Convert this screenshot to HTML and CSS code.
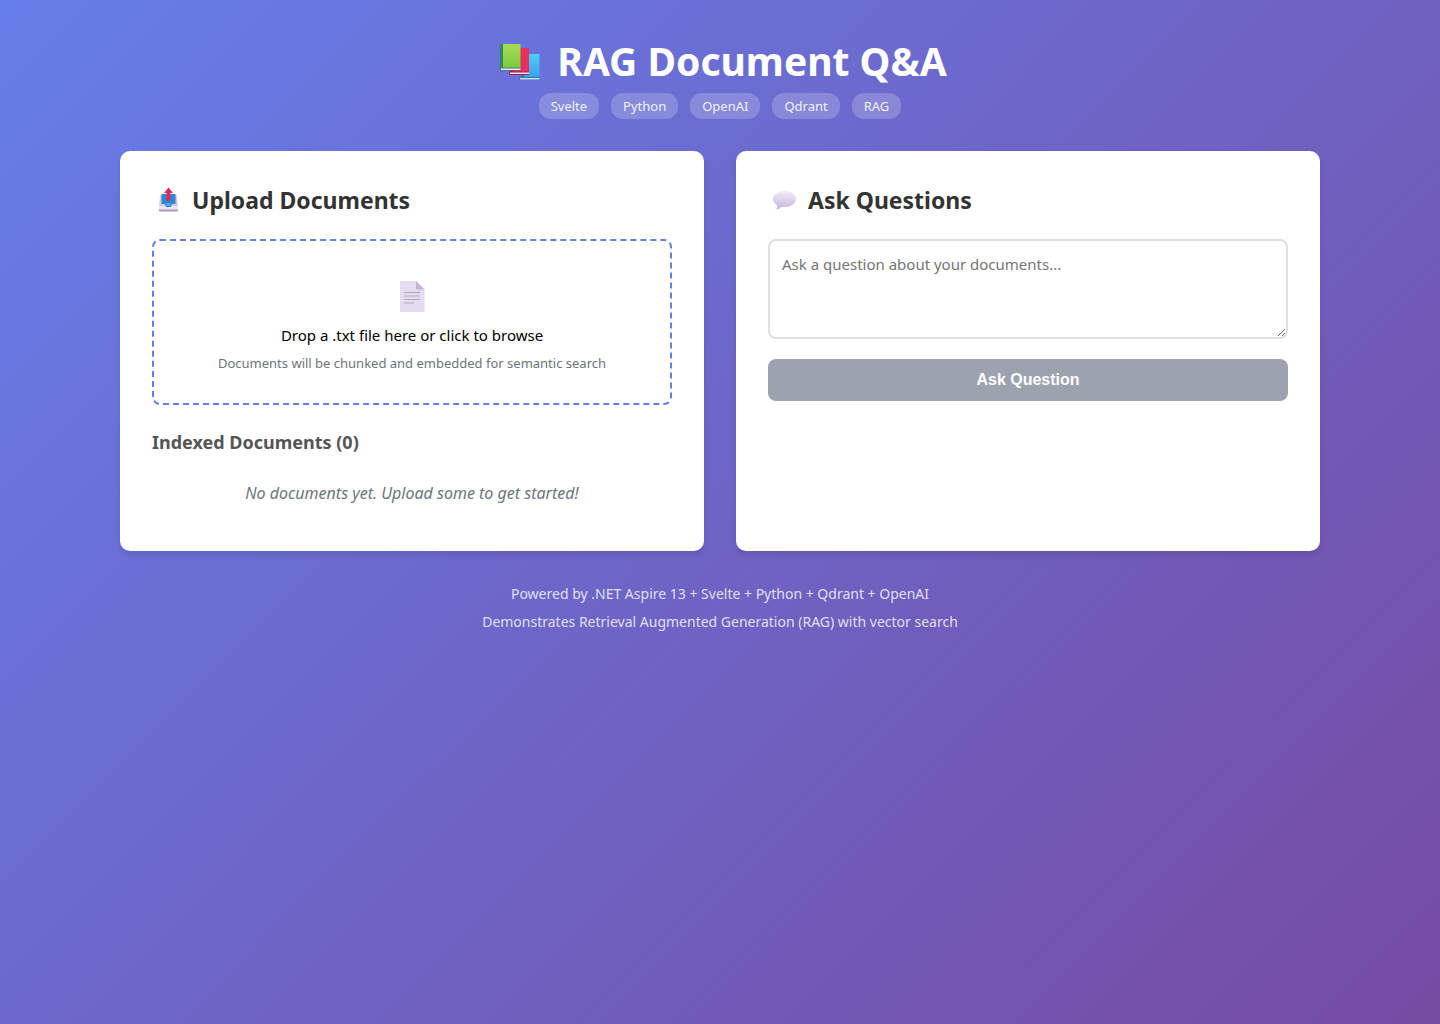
FILE: index.html
```
<!DOCTYPE html>
<html lang="en">
<head>
    <meta charset="UTF-8">
    <meta name="viewport" content="width=device-width, initial-scale=1.0">
    <title>RAG Document Q&amp;A</title>
    <link rel="stylesheet" href="styles.css">
</head>
<body>
    <div class="container">
        <header class="header">
            <h1>
                <svg class="icon-books" viewBox="0 -4 42 42" aria-hidden="true">
                    <defs>
                        <linearGradient id="green" x1="0" y1="0" x2="0" y2="1">
                            <stop offset="0" stop-color="#a5dc55"/>
                            <stop offset="1" stop-color="#7cc945"/>
                        </linearGradient>
                        <linearGradient id="blue" x1="0" y1="0" x2="0" y2="1">
                            <stop offset="0" stop-color="#4fcdf5"/>
                            <stop offset="1" stop-color="#3a9ee8"/>
                        </linearGradient>
                    </defs>
                    <path fill="#2580bd" d="M22 10h4v25h-4z"/>
                    <path fill="url(#blue)" d="M25 10h15.500v25H25z"/>
                    <path fill="#2b78b5" d="M20 33h20.500v3H21q-1 0-1-1z"/>
                    <path fill="#d9d5e8" d="M21 34h19.500v1.500H21z"/>
                    <path fill="#a91c4a" d="M11 4h4v26h-4z"/>
                    <path fill="#e6305f" d="M14 4h16v25H14z"/>
                    <path fill="#a91c4a" d="M10 27.500h20v3.500H11q-1 0-1-1z"/>
                    <path fill="#eae4f0" d="M11 28.500h19v1.500H11z"/>
                    <path fill="#2f8b57" d="M1 1q0-1 1-1h3v26H1z"/>
                    <path fill="url(#green)" d="M4 0h17.500v25H4z"/>
                    <path fill="#39845a" d="M1 23.500h20.500v3H2q-1 0-1-1z"/>
                    <path fill="#eae4f0" d="M2 24.500h19.500v1.500H2z"/>
                </svg>
                RAG Document Q&amp;A
            </h1>
            <div class="badges">
                <span class="badge">Svelte</span>
                <span class="badge">Python</span>
                <span class="badge">OpenAI</span>
                <span class="badge">Qdrant</span>
                <span class="badge">RAG</span>
            </div>
        </header>

        <main class="grid">
            <section class="card">
                <h2>
                    <svg class="icon-heading" viewBox="0 0 32 32" aria-hidden="true">
                        <path fill="#d5cbe2" d="M8.500 11h15.500q1 0 1 1l1 11H7l1-11q0-1 .5-1z"/>
                        <path fill="#ece5f3" d="M7 22h19v4H7z"/>
                        <path fill="#a797bd" d="M7 25.500h19v1q0 1-1 1H8q-1 0-1-1z"/>
                        <path fill="#2b86d3" d="M9.500 10h14v10h-3.500l-1 3h-5l-1-3H9.500z"/>
                        <path fill="#4aa5e6" d="M13.500 19h6l-1 3h-4z"/>
                        <path fill="#df2b5b" d="M16.500 3.500l4.500 5.500h-2.500v8h-4V9H12z"/>
                    </svg>
                    Upload Documents
                </h2>
                <label class="dropzone" for="fileInput">
                    <input class="file-input" type="file" id="fileInput" accept=".txt">
                    <svg class="icon-file" viewBox="0 0 25 31" aria-hidden="true">
                        <path fill="#e5dcef" d="M0 0h16l8.500 8.500V31H0z"/>
                        <path fill="#c3b8d0" d="M16 0l8.500 8.500H16z"/>
                        <path stroke="#b2a5c1" stroke-width="1.200" d="M4 11.500h16M4 15h16M4 18.500h16M4 22h10"/>
                    </svg>
                    <span class="drop-text">Drop a .txt file here or click to browse</span>
                    <span class="hint">Documents will be chunked and embedded for semantic search</span>
                </label>
                <h3>Indexed Documents (0)</h3>
                <p class="empty">No documents yet. Upload some to get started!</p>
            </section>

            <section class="card">
                <h2>
                    <svg class="icon-heading" viewBox="0 0 32 32" aria-hidden="true">
                        <defs>
                            <linearGradient id="bubble" x1="0" y1="0" x2="0" y2="1">
                                <stop offset="0" stop-color="#f1edf5"/>
                                <stop offset="1" stop-color="#c9b5e3"/>
                            </linearGradient>
                        </defs>
                        <path fill="url(#bubble)" d="M16.500 7c6.500 0 11.500 3.400 11.500 8s-5 8-11.500 8h-3c-1.500 1.800-3.500 2.500-5.500 2.200 1-1 1.500-2.500.8-4.200C6 19.500 5 17.500 5 15c0-4.600 5-8 11.500-8z"/>
                    </svg>
                    Ask Questions
                </h2>
                <form class="ask-form">
                    <textarea class="question" aria-label="Question" placeholder="Ask a question about your documents..."></textarea>
                    <button class="ask-button" type="submit" disabled>Ask Question</button>
                </form>
            </section>
        </main>

        <footer class="footer">
            <p>Powered by .NET Aspire 13 + Svelte + Python + Qdrant + OpenAI</p>
            <p>Demonstrates Retrieval Augmented Generation (RAG) with vector search</p>
        </footer>
    </div>
</body>
</html>
```
FILE: styles.css
```
* {
    box-sizing: border-box;
}
body {
    font-family: "Segoe UI", "Noto Sans", sans-serif;
    margin: 0;
    padding: 32px;
    min-height: 100vh;
    background: linear-gradient(135deg, #667eea 0%, #764ba2 100%);
    color: #000000;
}
h1, h2, h3, p {
    margin: 0;
}
.container {
    max-width: 1200px;
    margin: 0 auto;
}
.header {
    color: #ffffff;
    text-align: center;
    margin-bottom: 32px;
}
h1 {
    display: flex;
    justify-content: center;
    align-items: center;
    gap: 16px;
    margin-bottom: 4px;
    padding-left: 6px;
    font-size: 39px;
    line-height: 57px;
}
.icon-books {
    width: 42px;
    height: 42px;
}
.badges {
    display: flex;
    flex-wrap: wrap;
    justify-content: center;
    gap: 12px;
}
.badge {
    padding: 4px 12px;
    border-radius: 12px;
    background: rgba(255, 255, 255, 0.2);
    color: rgba(255, 255, 255, 0.9);
    font-size: 13px;
    line-height: 18px;
}
.grid {
    display: grid;
    grid-template-columns: 1fr 1fr;
    gap: 32px;
}
.card {
    min-height: 400px;
    padding: 32px;
    border-radius: 10px;
    background: #ffffff;
    box-shadow: 0 4px 6px rgba(0, 0, 0, 0.1);
}
h2 {
    display: flex;
    align-items: center;
    gap: 8px;
    margin-bottom: 22px;
    color: #333333;
    font-size: 23px;
    line-height: 34px;
}
.icon-heading {
    width: 32px;
    height: 32px;
}
.dropzone {
    display: flex;
    flex-direction: column;
    align-items: center;
    padding: 40px 32px 28px;
    border: 2px dashed #667eea;
    border-radius: 8px;
    text-align: center;
    cursor: pointer;
}
.dropzone:hover {
    background: #f8f9ff;
}
.file-input {
    position: absolute;
    width: 1px;
    height: 1px;
    opacity: 0;
}
.icon-file {
    width: 25px;
    height: 31px;
    margin-bottom: 11px;
}
.drop-text {
    font-size: 15px;
    line-height: 24px;
}
.hint {
    margin-top: 4px;
    color: #6c757d;
    font-size: 13px;
    line-height: 24px;
}
h3 {
    margin: 24px 0 18px;
    color: #555555;
    font-size: 18px;
    line-height: 26px;
}
.empty {
    padding: 8px 0;
    color: #6c757d;
    font-size: 16px;
    font-style: italic;
    line-height: 24px;
    text-align: center;
}
.ask-form {
    display: flex;
    flex-direction: column;
    gap: 20px;
}
.question {
    width: 100%;
    height: 100px;
    padding: 12px;
    border: 2px solid #e0e0e0;
    border-radius: 8px;
    font-family: inherit;
    font-size: 15px;
    line-height: 22px;
    resize: vertical;
}
.question::placeholder {
    color: #757575;
}
.ask-button {
    padding: 12px 24px;
    border: none;
    border-radius: 8px;
    background: #667eea;
    color: #ffffff;
    font-family: "Liberation Sans", Arial, sans-serif;
    font-size: 16px;
    font-weight: bold;
    line-height: 18px;
    cursor: pointer;
}
.ask-button:disabled {
    background: #9ca3af;
    cursor: not-allowed;
}
.footer {
    margin-top: 33px;
    color: rgba(255, 255, 255, 0.8);
    font-size: 14px;
    line-height: 20px;
    text-align: center;
}
.footer p {
    margin-bottom: 8px;
}
@media (max-width: 768px) {
    .grid {
        grid-template-columns: 1fr;
    }
}
```
